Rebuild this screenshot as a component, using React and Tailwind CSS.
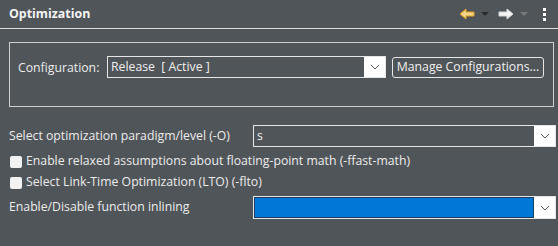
import React from 'react';

const Chevron = () => (
  <svg width="10" height="6" viewBox="0 0 10 6" fill="none">
    <path d="M1 1l4 4 4-4" stroke="#555" strokeWidth="1" />
  </svg>
);

const Combo = ({ value, width, selected }) => (
  <div className={`flex h-[22px] shrink-0 ${width} border border-[#e6e6e6] bg-white`}>
    <div className={`flex flex-1 items-center px-[3px] ${selected ? 'bg-[#0078d7] border border-[#1e3a5a]' : 'bg-[#505559]'}`}>
      <span className="text-[12.25px] text-[#f0f0f0] whitespace-pre">{value}</span>
    </div>
    <div className="flex w-[21px] items-center justify-center bg-white">
      <Chevron />
    </div>
  </div>
);

const Check = ({ label }) => (
  <label className="flex h-[21px] items-center gap-[4px] pl-[1px]">
    <span className="h-[12px] w-[12px] rounded-[2px] bg-[#f2f2f2]" />
    <span className="text-[12.25px] text-[#ececec]">{label}</span>
  </label>
);

export default function App() {
  return (
    <div className="h-[246px] w-[558px] bg-[#505559] font-['Open_Sans','Noto_Sans',sans-serif] text-[#ececec]">
      <div className="flex h-[29px] items-center justify-between border-b border-[#dcdcdc] pl-[9px] pr-[12px]">
        <span className="text-[12.4px] font-bold text-[#f4f4f4]">Optimization</span>
        <div className="flex items-center">
          <svg width="16" height="12" viewBox="0 0 16 12">
            <path d="M1 6l6-5v3h8v4H7v3z" fill="#f5d58a" stroke="#e0a020" strokeWidth="1" />
          </svg>
          <svg className="ml-[6px]" width="8" height="5" viewBox="0 0 8 5">
            <path d="M0 0h8L4 4z" fill="#2a2a2a" />
          </svg>
          <svg className="ml-[9px]" width="16" height="12" viewBox="0 0 16 12">
            <path d="M15 6L9 1v3H1v4h8v3z" fill="#f4f4f4" stroke="#d8d8d8" strokeWidth="1" />
          </svg>
          <svg className="ml-[6px]" width="8" height="5" viewBox="0 0 8 5">
            <path d="M0 0h8L4 4z" fill="#777" />
          </svg>
          <div className="ml-[15px] flex flex-col gap-[2px]">
            <span className="h-[3px] w-[3px] bg-white" />
            <span className="h-[3px] w-[3px] bg-white" />
            <span className="h-[3px] w-[3px] bg-white" />
          </div>
        </div>
      </div>

      <div className="pl-[9px] pr-[2px] pt-[13px]">
        <div className="flex h-[65px] w-[545px] items-start border border-[#cfcfcf] pl-[8px] pt-[13px]">
          <span className="mt-[3px] w-[89px] text-[12.25px]">Configuration:</span>
          <Combo value="Release  [ Active ]" width="w-[279px]" />
          <button className="ml-[6px] mt-[1px] h-[21px] w-[152px] rounded-[3px] border border-[#e6e6e6] text-[12.25px] text-[#f0f0f0]">
            Manage Configurations...
          </button>
        </div>

        <div className="mt-[18px] flex items-center">
          <span className="w-[244px] text-[12.25px]">Select optimization paradigm/level (-O)</span>
          <Combo value="s" width="w-[303px]" />
        </div>
        <div className="mt-[4px]">
          <Check label="Enable relaxed assumptions about floating-point math (-ffast-math)" />
          <Check label="Select Link-Time Optimization (LTO) (-flto)" />
        </div>
        <div className="mt-[3px] flex items-center">
          <span className="w-[244px] text-[12.25px]">Enable/Disable function inlining</span>
          <Combo value="" width="w-[303px] h-[23px]" selected />
        </div>
      </div>
    </div>
  );
}
